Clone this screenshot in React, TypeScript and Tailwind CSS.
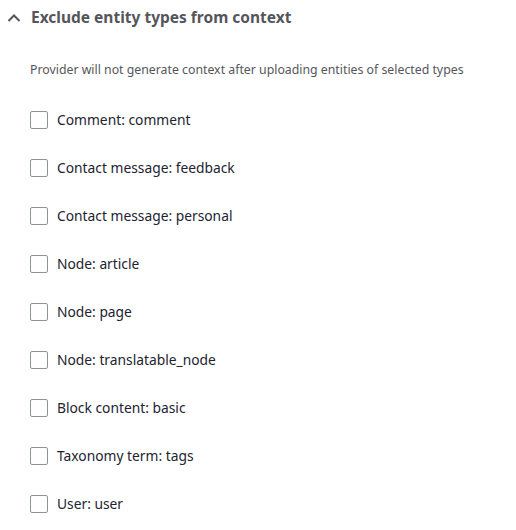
const ENTITY_TYPES = [
  "Comment: comment",
  "Contact message: feedback",
  "Contact message: personal",
  "Node: article",
  "Node: page",
  "Node: translatable_node",
  "Block content: basic",
  "Taxonomy term: tags",
  "User: user",
];

function ChevronUp() {
  return (
    <svg width="14" height="8" viewBox="0 0 14 8" fill="none" aria-hidden>
      <path d="M1.5 7L7 1.5L12.5 7" stroke="#55565b" strokeWidth="2" />
    </svg>
  );
}

export default function App() {
  return (
    <div
      className="w-[516px] h-[530px] bg-white overflow-hidden"
      style={{ fontFamily: "'Noto Sans', sans-serif" }}
    >
      <div className="flex items-center gap-[10px] pl-[7px] pt-[7px] h-[28px]">
        <ChevronUp />
        <h2 className="text-[15.5px] font-bold text-[#55565b] leading-none">
          Exclude entity types from context
        </h2>
      </div>

      <div className="pl-[30px] pt-[33px]">
        <p className="text-[12.3px] text-[#55565b] leading-[18px]">
          Provider will not generate context after uploading entities of selected types
        </p>

        <ul className="mt-[32px] flex flex-col gap-[30px]">
          {ENTITY_TYPES.map((label) => (
            <li key={label} className="flex items-center gap-[9px] h-[18px]">
              <span className="w-[18px] h-[18px] rounded-[2px] border border-[#8e929c] bg-white flex-shrink-0" />
              <span className="text-[13.8px] text-[#222330] leading-none">{label}</span>
            </li>
          ))}
        </ul>
      </div>
    </div>
  );
}
